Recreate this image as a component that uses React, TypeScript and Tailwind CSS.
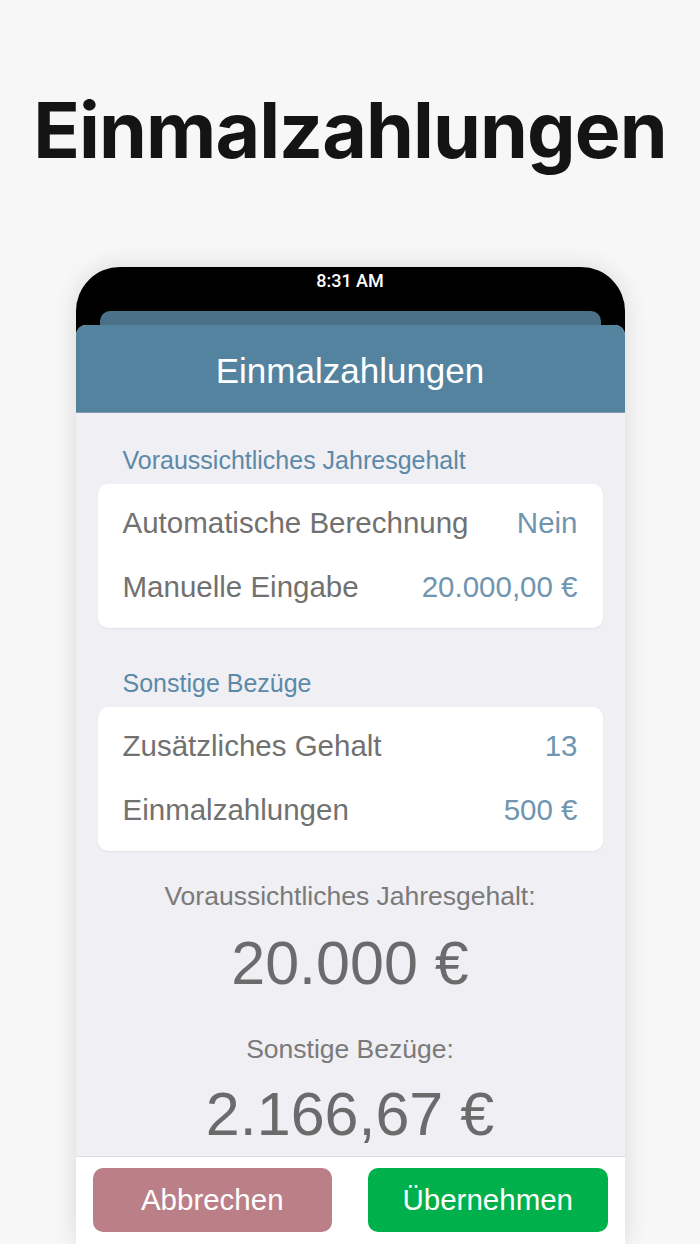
import React from 'react';

const rows1 = [
  { label: 'Automatische Berechnung', value: 'Nein' },
  { label: 'Manuelle Eingabe', value: '20.000,00 €' },
];

const rows2 = [
  { label: 'Zusätzliches Gehalt', value: '13' },
  { label: 'Einmalzahlungen', value: '500 €' },
];

const Section: React.FC<{ title: string; rows: { label: string; value: string }[] }> = ({ title, rows }) => (
  <div>
    <div className="px-[47px] h-[28px] leading-[28px] text-[25px] text-[#5c89a7] mb-[10px]">{title}</div>
    <div className="mx-[22px] bg-white rounded-[10px] py-2 shadow-[0_1px_2px_rgba(0,0,0,0.06)]">
      {rows.map((r) => (
        <div key={r.label} className="h-[64px] flex items-center justify-between px-[25px] pb-[2px] text-[29.5px]">
          <span className="text-[#717171]">{r.label}</span>
          <span className="text-[#7095b0]">{r.value}</span>
        </div>
      ))}
    </div>
  </div>
);

const App: React.FC = () => {
  return (
    <div className="h-[1244px] w-full overflow-hidden bg-[#f7f7f7] flex flex-col items-center">
      <h1 className="mt-[88px] text-[77px] leading-[84px] font-bold text-[#141414] tracking-[-0.012em] font-['Inter',sans-serif]">
        Einmalzahlungen
      </h1>

      <div className="mt-[95px] w-[549px] bg-black rounded-t-[44px] shadow-[0_0_24px_rgba(0,0,0,0.12)] overflow-hidden font-['Liberation_Sans',Arial,sans-serif]">
        <div className="h-[44px] flex justify-center pt-[2px] leading-[24px] text-white text-[18px] font-medium font-['Roboto',sans-serif]">8:31 AM</div>
        <div className="mx-[24px] h-[14px] rounded-t-[10px] bg-[#4b7189]"></div>
        <div className="rounded-t-[10px] bg-[#efeff4] overflow-hidden">
          <div className="h-[88px] bg-[#5483a0] flex items-center justify-center pt-[6px] text-white text-[35px] border-b border-[#7e9db2]">
            Einmalzahlungen
          </div>

          <div className="pt-[33px]">
            <Section title="Voraussichtliches Jahresgehalt" rows={rows1} />
            <div className="h-[41px]"></div>
            <Section title="Sonstige Bezüge" rows={rows2} />
          </div>

          <div className="flex flex-col items-center pt-[30px] pb-[7px]">
            <div className="text-[26.5px] leading-[30px] text-[#7a7a7a]">Voraussichtliches Jahresgehalt:</div>
            <div className="mt-[17px] text-[61px] leading-[70px] text-[#6b6b6b]">20.000 €</div>
            <div className="mt-[36px] text-[26.5px] leading-[30px] text-[#7a7a7a]">Sonstige Bezüge:</div>
            <div className="mt-[15px] text-[61px] leading-[70px] text-[#6b6b6b]">2.166,67 €</div>
          </div>

          <div className="bg-white border-t border-[#dcdce2] px-[17px] pt-[11px] pb-[30px] grid grid-cols-2 gap-[36px]">
            <button className="h-[64px] rounded-[10px] bg-[#bb7f87] text-white text-[29.5px]">Abbrechen</button>
            <button className="h-[64px] rounded-[10px] bg-[#00b04b] text-white text-[29.5px]">Übernehmen</button>
          </div>
        </div>
      </div>
    </div>
  );
};

export default App;
